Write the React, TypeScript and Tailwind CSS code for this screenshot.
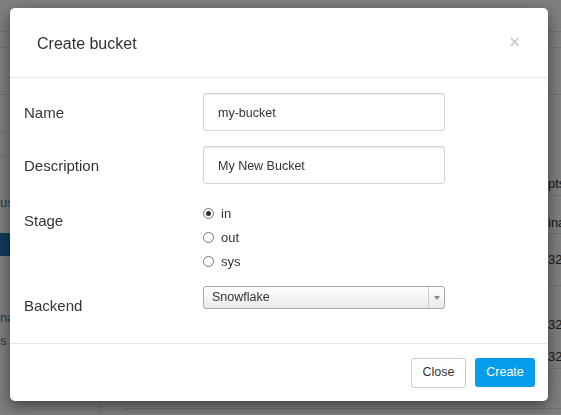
import React from 'react';

const font = { fontFamily: '"Liberation Sans", Arial, sans-serif' };

const Radio: React.FC<{ label: string; checked?: boolean }> = ({ label, checked }) => (
  <label className="flex h-6 items-center gap-[7px] pt-[1px] text-[13px] text-[#333]">
    <span className="flex h-[11px] w-[11px] items-center justify-center rounded-full border border-[#767676] bg-white">
      {checked && <span className="h-[5px] w-[5px] rounded-full bg-[#333]"></span>}
    </span>
    {label}
  </label>
);

const App: React.FC = () => {
  return (
    <div className="relative h-[415px] w-[561px] overflow-hidden bg-white" style={font}>
      {/* Page behind the dialog */}
      <div className="flex h-full flex-col whitespace-nowrap text-[13px]">
        <div className="h-[32px] border-b border-[#e2e2e2]"></div>
        <div className="h-[16px] border-b border-[#e2e2e2]"></div>
        <div className="flex flex-1">
          <div className="flex w-[100px] shrink-0 flex-col overflow-hidden border-r border-[#e2e2e2]">
            <div className="h-[47px] border-b border-[#e2e2e2]"></div>
            <div className="h-[37px] border-b border-[#e2e2e2]"></div>
            <div className="h-[25px] border-b border-[#e2e2e2]"></div>
            <div className="mt-[36px] text-[#337ab7]">us</div>
            <div className="mt-[20px] h-[23px] bg-[#1f77b4]"></div>
            <div className="mt-[52px] text-[#337ab7]">na</div>
            <div className="mt-[4px] text-[#337ab7]">s</div>
          </div>
          <div className="flex min-w-0 flex-1 flex-col">
            <div className="h-[47px] border-b border-[#e2e2e2]"></div>
            <div className="flex-1 pl-[448px] text-[13px] text-[#333]">
              <div className="mt-[77px] flex h-[24px] items-center border-b border-[#e2e2e2]">pts</div>
              <div className="flex h-[38px] items-end border-b border-[#e2e2e2] pb-[1px]">ina</div>
              <div className="flex h-[52px] items-start border-b border-[#e2e2e2] pt-[16px]">32</div>
              <div className="pt-[29px]">32</div>
              <div className="h-[34px] border-b border-[#e2e2e2] pt-[12px]">32</div>
            </div>
            <div className="ml-[25px] h-[7px] border-t border-[#e2e2e2]"></div>
          </div>
        </div>
      </div>

      {/* Backdrop */}
      <div className="fixed inset-0 bg-black/50"></div>

      {/* Dialog */}
      <div className="fixed left-[10px] top-[8px] w-[538px] rounded-[5px] bg-white shadow-[0_5px_15px_rgba(0,0,0,0.5)]">
        <div className="flex h-[70px] items-center justify-between border-b border-[#e5e5e5] pl-[27px] pr-[28px]">
          <h4 className="pt-[2px] text-[16px] text-[#333]">Create bucket</h4>
          <button className="mb-[1px] text-[18px] font-bold leading-none text-[#d2d2d2]">×</button>
        </div>

        <div className="h-[265px] px-[14px] pt-[15px]">
          <div className="flex h-[38px] items-center">
            <label className="w-[179px] pt-[3px] text-[15px] text-[#333]">Name</label>
            <input
              defaultValue="my-bucket"
              className="h-[38px] w-[242px] rounded-[3px] border border-[#d4d4dc] px-[14px] pt-[2px] text-[12.5px] text-[#333] shadow-[inset_0_1px_1px_rgba(0,0,0,0.075)] outline-none"
            />
          </div>

          <div className="mt-[15px] flex h-[38px] items-center">
            <label className="w-[179px] pt-[3px] text-[15px] text-[#333]">Description</label>
            <input
              defaultValue="My New Bucket"
              className="h-[38px] w-[242px] rounded-[3px] border border-[#d4d4dc] px-[14px] pt-[2px] text-[12.5px] text-[#333] shadow-[inset_0_1px_1px_rgba(0,0,0,0.075)] outline-none"
            />
          </div>

          <div className="mt-[17px] flex">
            <label className="w-[179px] pt-[10px] text-[15px] leading-5 text-[#333]">Stage</label>
            <div className="flex flex-col">
              <Radio label="in" checked />
              <Radio label="out" />
              <Radio label="sys" />
            </div>
          </div>

          <div className="mt-[13px] flex">
            <label className="w-[179px] pt-[10px] text-[15px] leading-5 text-[#333]">Backend</label>
            <div className="flex h-[23px] w-[242px] items-stretch rounded-[3px] border border-[#aaa] bg-gradient-to-b from-white to-[#eaeaea]">
              <span className="flex flex-1 items-center pl-[8px] text-[12.5px] text-[#333]">Snowflake</span>
              <span className="flex w-[16px] items-center justify-center border-l border-[#ccc]">
                <svg width="6" height="4" viewBox="0 0 6 4">
                  <path d="M0 0h6L3 4z" fill="#888" />
                </svg>
              </span>
            </div>
          </div>
        </div>

        <div className="flex h-[58px] items-center justify-end gap-[9px] border-t border-[#e5e5e5] pr-[13px]">
          <button className="h-[30px] w-[55px] rounded-[3px] border border-[#ccc] bg-white text-[12.5px] text-[#333]">
            Close
          </button>
          <button className="h-[29px] w-[60px] rounded-[3px] bg-[#069cec] text-[12.5px] text-white">
            Create
          </button>
        </div>
      </div>
    </div>
  );
};

export default App;
